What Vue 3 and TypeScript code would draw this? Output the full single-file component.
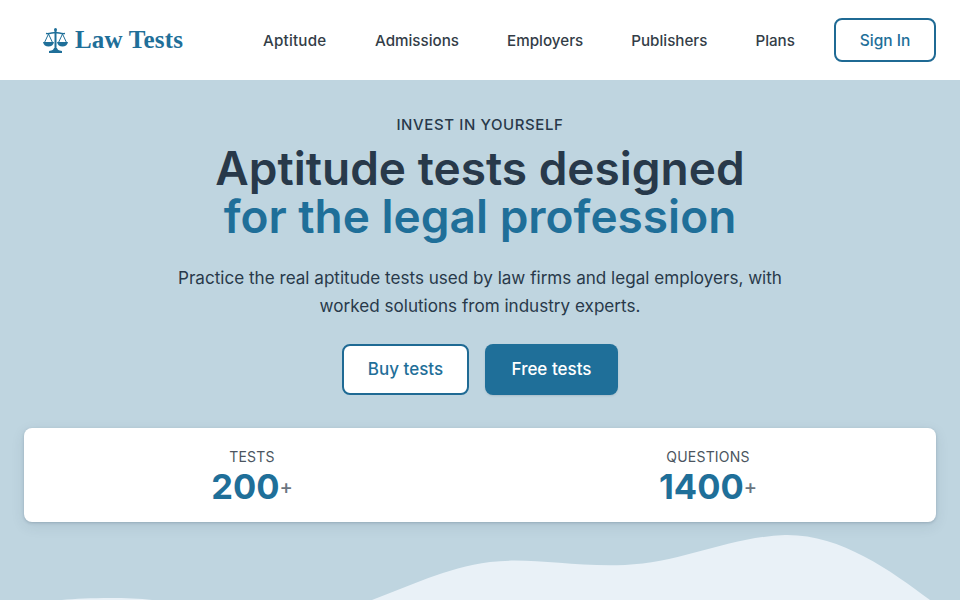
<script setup lang="ts">
const links: string[] = ['Aptitude', 'Admissions', 'Employers', 'Publishers', 'Plans']
const stats = [
  { label: 'TESTS', value: '200' },
  { label: 'QUESTIONS', value: '1400' },
]
</script>

<template>
  <div class="page">
    <header class="topbar">
      <a class="logo">
        <svg class="scale" viewBox="0 0 25 25" width="25" height="25" fill="none">
          <circle cx="12.500" cy="1.500" r="1.500" fill="#1f6f99" />
          <path d="M12.500 2v19" stroke="#1f6f99" stroke-width="2" />
          <path d="M3 5.500c3.500.5 6.500-1 9.500-1s6 1.500 9.500 1" stroke="#1f6f99" stroke-width="1.400" />
          <path d="M5.500 6 1.500 14.500M5.500 6l4 8.500M19.500 6l-4 8.500M19.500 6l4 8.500" stroke="#1f6f99" stroke-width="1" />
          <path d="M0 14h11c-.5 3-2.800 4.500-5.500 4.500S.5 17 0 14zM14 14h11c-.5 3-2.800 4.500-5.500 4.500S14.500 17 14 14z" fill="#1f6f99" />
          <path d="M11 20h3c.3 1.500 1.500 2.500 5 3v2H6v-2c3.500-.5 4.700-1.500 5-3z" fill="#1f6f99" />
        </svg>
        <span>Law Tests</span>
      </a>
      <nav class="nav">
        <a v-for="l in links" :key="l">{{ l }}</a>
      </nav>
      <button class="signin">Sign In</button>
    </header>

    <main class="hero">
      <p class="eyebrow">INVEST IN YOURSELF</p>
      <h1>Aptitude tests designed<br /><em>for the legal profession</em></h1>
      <p class="lead">Practice the real aptitude tests used by law firms and legal employers, with worked solutions from industry experts.</p>
      <div class="actions">
        <button class="btn ghost">Buy tests</button>
        <button class="btn solid">Free tests</button>
      </div>
      <section class="stats">
        <div v-for="s in stats" :key="s.label" class="stat">
          <div class="label">{{ s.label }}</div>
          <div class="value">{{ s.value }}<span>+</span></div>
        </div>
      </section>
    </main>

    <svg class="wave" viewBox="0 0 960 80" width="960" height="80" preserveAspectRatio="none">
      <path d="M372 80C410 66 445 48 490 42C530 37 570 47 625 45C680 43 730 17 785 15C840 14 890 50 930 80Z" fill="#e9f1f7" />
      <path d="M62 80C85 78 125 77 152 80Z" fill="#e9f1f7" />
    </svg>
  </div>
</template>

<style>
html, body { margin: 0; }
</style>

<style scoped>
.page {
  position: relative;
  width: 960px;
  height: 600px;
  overflow: hidden;
  background: #bfd5e0;
  font-family: Inter, "Liberation Sans", sans-serif;
  color: #28394a;
}
.topbar {
  height: 80px;
  box-sizing: border-box;
  background: #fff;
  display: flex;
  align-items: center;
  padding: 0 24px 0 43px;
}
.logo {
  display: flex;
  align-items: center;
  gap: 7px;
  font-family: "Liberation Serif", serif;
  font-weight: 700;
  font-size: 25px;
  letter-spacing: .2px;
  color: #1f6f99;
  width: 220px;
}
.nav { display: flex; gap: 48px; font-size: 15.200px; font-weight: 500; color: #333d47; }
.nav a:first-child { min-width: 64px; letter-spacing: .2px; }
.signin {
  margin-left: auto;
  width: 102px;
  height: 44px;
  border: 2px solid #1f6a94;
  border-radius: 8px;
  background: #fff;
  color: #1f6f99;
  font: 500 15.500px Inter, sans-serif;
}
.hero { display: flex; flex-direction: column; align-items: center; padding: 36px 24px 0; position: relative; z-index: 1; }
.eyebrow { margin: 0; font-size: 15px; line-height: 18px; font-weight: 500; letter-spacing: .6px; }
h1 { margin: 10px 0 0; font-size: 46px; line-height: 48px; font-weight: 600; text-align: center; color: #28394a; }
h1 em { font-style: normal; color: #1f6f99; }
.lead { margin: 24px 0 0; width: 640px; text-align: center; font-size: 17.100px; line-height: 28px; }
.actions { display: flex; gap: 16px; margin-top: 24px; }
.btn { height: 51px; padding-bottom: 2px; border-radius: 8px; font: 500 17px Inter, sans-serif; box-sizing: border-box; }
.ghost { width: 127px; background: #fff; border: 2px solid #1f6a94; color: #1f6f99; }
.solid { width: 133px; background: #1f6f99; border: 0; color: #fff; box-shadow: 0 1px 2px rgba(40, 60, 80, .15); }
.stats {
  align-self: stretch;
  display: grid;
  grid-template-columns: 1fr 1fr;
  margin-top: 33px;
  height: 94px;
  background: #fff;
  border-radius: 8px;
  box-shadow: 0 1px 3px rgba(40, 60, 80, .22), 0 4px 14px rgba(40, 60, 80, .1);
}
.stat { text-align: center; padding-top: 20px; }
.label { font-size: 14px; line-height: 18px; letter-spacing: .2px; color: #4b5560; }
.value { margin-top: 1px; font-size: 34.500px; line-height: 40px; font-weight: 700; color: #1f6f99; }
.value span { font-size: 20px; font-weight: 500; color: #6b7580; vertical-align: 5px; }
.wave { position: absolute; left: 0; bottom: 0; }
</style>
